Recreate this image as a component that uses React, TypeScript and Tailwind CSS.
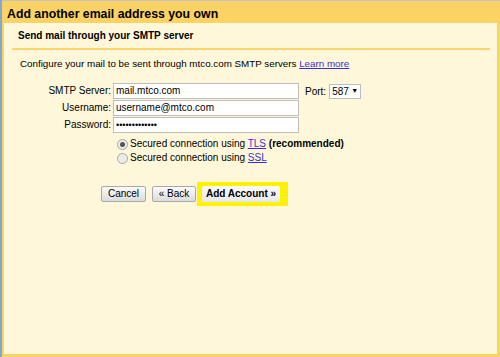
export default function App() {
  return (
    <div
      className="flex h-[357px] w-[500px] overflow-hidden bg-[#fbd264] text-black"
      style={{ fontFamily: '"Liberation Sans", Arial, sans-serif' }}
    >
      <div className="w-[2px] bg-[#7fa9d1]" />
      <div className="flex flex-1 flex-col border-t border-[#c4c4c4]">
        <div className="h-[22px] pl-[5px] pt-[5px] text-[12.3px] font-bold leading-[16px]">
          Add another email address you own
        </div>
        <div className="mb-[3px] ml-[2px] mr-[3px] flex-1 bg-[#fff7d9]">
          <div className="pl-[14px] pt-[6px] text-[10px] font-bold leading-[14px]">
            Send mail through your SMTP server
          </div>
          <div className="ml-[8px] mr-[7px] mt-[5px] h-[2px] bg-[#fad46c]" />
          <div className="pl-[16px] pt-[7px] text-[9.8px] leading-[14px]">
            Configure your mail to be sent through mtco.com SMTP servers{' '}
            <a href="#" className="text-[#3b2fd6] underline">Learn more</a>
          </div>

          <div className="mt-[12px] flex text-[10px]">
            <div className="flex w-[107px] flex-col items-end gap-[1px]">
              <span className="h-[16px] leading-[15px]">SMTP Server:</span>
              <span className="h-[16px] leading-[15px]">Username:</span>
              <span className="h-[16px] leading-[15px]">Password:</span>
            </div>
            <div className="ml-[2px] flex flex-col gap-[1px]">
              <div className="h-[16px] w-[186px] border border-[#bdbdbd] bg-white pl-[2px] leading-[14px]">mail.mtco.com</div>
              <div className="h-[16px] w-[186px] border border-[#bdbdbd] bg-white pl-[2px] leading-[14px]">username@mtco.com</div>
              <div className="h-[16px] w-[186px] border border-[#bdbdbd] bg-white pl-[2px] text-[9px] leading-[14px]">•••••••••••••</div>
            </div>
            <div className="ml-[6px] flex h-[16px] items-center gap-[3px]">
              <span>Port:</span>
              <div className="flex h-[15px] w-[32px] items-center justify-between border border-[#bdbdbd] bg-white pl-[2px] pr-[2px]">
                <span>587</span>
                <span className="text-[7px]">▼</span>
              </div>
            </div>
          </div>

          <div className="ml-[113px] mt-[4px] flex flex-col text-[10px] leading-[14px]">
            <div className="flex items-center gap-[2px]">
              <span className="flex h-[11px] w-[11px] items-center justify-center rounded-full border border-[#a6a6a6] bg-[#ececec]">
                <span className="h-[5px] w-[5px] rounded-full bg-[#555]" />
              </span>
              <span>
                Secured connection using <a href="#" className="text-[#3b2fd6] underline">TLS</a>{' '}
                <b>(recommended)</b>
              </span>
            </div>
            <div className="flex items-center gap-[2px]">
              <span className="h-[11px] w-[11px] rounded-full border border-[#a6a6a6] bg-[#ececec]" />
              <span>
                Secured connection using <a href="#" className="text-[#3b2fd6] underline">SSL</a>
              </span>
            </div>
          </div>

          <div className="ml-[97px] mt-[17px] flex h-[24px] items-center text-[10px]">
            <button className="h-[16px] w-[45px] rounded-[2px] border border-[#a9a9a9] bg-gradient-to-b from-[#fbfbfb] to-[#dcdcdc] leading-[14px]">
              Cancel
            </button>
            <button className="ml-[6px] h-[16px] w-[44px] rounded-[2px] border border-[#a9a9a9] bg-gradient-to-b from-[#fbfbfb] to-[#dcdcdc] leading-[14px]">
              « Back
            </button>
            <div className="ml-[1px] flex h-[24px] w-[91px] items-center bg-[#fff200] pl-[5px]">
              <button className="h-[16px] w-[78px] rounded-[2px] bg-gradient-to-b from-[#fbfbfb] to-[#e8e8e8] font-bold leading-[16px]">
                Add Account »
              </button>
            </div>
          </div>
        </div>
      </div>
    </div>
  )
}
